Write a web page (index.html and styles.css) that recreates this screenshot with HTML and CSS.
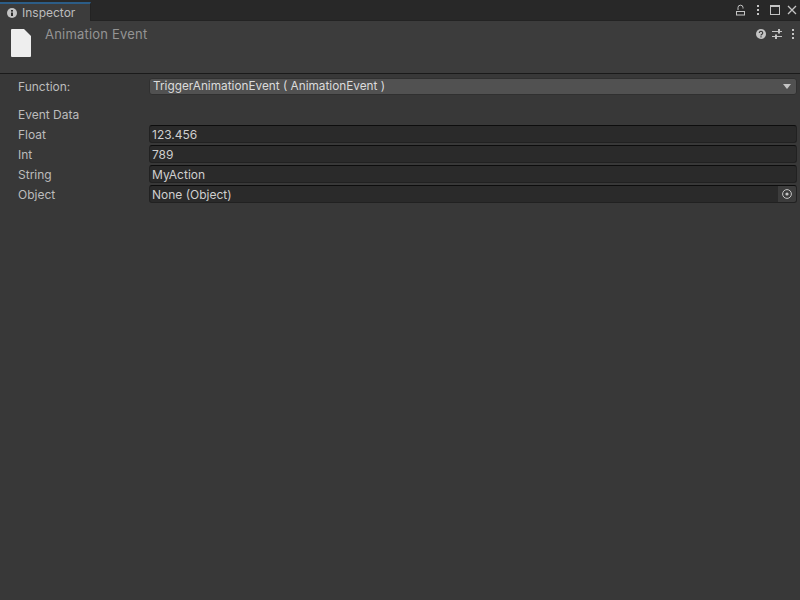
FILE: index.html
```html
<!DOCTYPE html>
<html lang="en">
<head>
<meta charset="utf-8">
<title>Inspector</title>
<link rel="stylesheet" href="styles.css">
</head>
<body>
<div class="tabbar">
  <div class="tab">
    <svg class="tab-icon" width="10" height="10" viewBox="0 0 10 10"><circle cx="5" cy="5" r="5" fill="#c4c4c4"/><rect x="4" y="2" width="2" height="1.6" fill="#2b2b2b"/><rect x="4" y="4.5" width="2" height="3.5" fill="#2b2b2b"/></svg>
    <span>Inspector</span>
  </div>
  <div class="tab-tools">
    <svg width="10" height="12" viewBox="0 0 10 12"><path d="M2 6V3.5a2.5 2.3 0 0 1 5 0V4.5" fill="none" stroke="#c4c4c4"/><rect x="0.5" y="7.5" width="8" height="3.5" fill="none" stroke="#c4c4c4"/></svg>
    <svg width="4" height="12" viewBox="0 0 4 12"><rect x="1" y="1" width="2" height="2" fill="#c4c4c4"/><rect x="1" y="5" width="2" height="2" fill="#c4c4c4"/><rect x="1" y="9" width="2" height="2" fill="#c4c4c4"/></svg>
    <svg width="10" height="10" viewBox="0 0 10 10"><rect x=".5" y=".5" width="9" height="9" fill="none" stroke="#c4c4c4"/><rect x="0" y="0" width="10" height="2" fill="#c4c4c4"/></svg>
    <svg class="close" width="10" height="10" viewBox="0 0 10 10"><path d="M1 1l8 8M9 1l-8 8" stroke="#c4c4c4" stroke-width="1.3"/></svg>
  </div>
</div>
<header class="header">
  <svg class="file-icon" width="20" height="28" viewBox="0 0 20 28"><path d="M1 0H13L20 7V27a1 1 0 0 1-1 1H1a1 1 0 0 1-1-1V1a1 1 0 0 1 1-1Z" fill="#eeeeee"/></svg>
  <div class="title">Animation Event</div>
  <div class="header-tools">
    <svg width="10" height="10" viewBox="0 0 10 10"><circle cx="5" cy="5" r="5" fill="#c4c4c4"/><path d="M3.3 3.9a1.7 1.6 0 1 1 2.6 1.4c-.6.4-.9.6-.9 1.2" fill="none" stroke="#3c3c3c" stroke-width="1.2"/><rect x="4.4" y="7.2" width="1.2" height="1.2" fill="#3c3c3c"/></svg>
    <svg width="10" height="10" viewBox="0 0 10 10"><path d="M0 2.5h10M0 7.5h10" stroke="#c4c4c4"/><rect x="6" y="0" width="2" height="4.5" fill="#c4c4c4"/><rect x="3" y="5.5" width="2" height="4.5" fill="#c4c4c4"/></svg>
    <svg class="more" width="4" height="12" viewBox="0 0 4 12"><rect x="1" y="1" width="2" height="2" fill="#c4c4c4"/><rect x="1" y="5" width="2" height="2" fill="#c4c4c4"/><rect x="1" y="9" width="2" height="2" fill="#c4c4c4"/></svg>
  </div>
</header>
<main class="body">
  <div class="row fn-row">
    <div class="label">Function:</div>
    <div class="dropdown"><span>TriggerAnimationEvent ( AnimationEvent )</span><i class="caret"></i></div>
  </div>
  <div class="section">Event Data</div>
  <div class="row">
    <div class="label">Float</div>
    <div class="field">123.456</div>
  </div>
  <div class="row">
    <div class="label">Int</div>
    <div class="field">789</div>
  </div>
  <div class="row">
    <div class="label">String</div>
    <div class="field">MyAction</div>
  </div>
  <div class="row">
    <div class="label">Object</div>
    <div class="field object"><span>None (Object)</span>
      <div class="picker"><svg width="10" height="10" viewBox="0 0 10 10"><circle cx="5" cy="5" r="4.4" fill="none" stroke="#c4c4c4"/><circle cx="5" cy="5" r="1.6" fill="#c4c4c4"/></svg></div>
    </div>
  </div>
</main>
</body>
</html>
```
FILE: styles.css
```css
* { box-sizing: border-box; }
html, body { margin: 0; height: 100%; }
body {
  background: #383838;
  color: #bcbcbc;
  font: 12px/16px Inter, "Liberation Sans", sans-serif;
  overflow: hidden;
}
.tabbar {
  height: 21px;
  background: #282828;
  border-bottom: 1px solid #232323;
  display: flex;
  justify-content: space-between;
}
.tab {
  width: 91px;
  margin-top: 2px;
  height: 19px;
  background: #3c3c3c;
  border-top: 2px solid #2c5d87;
  border-right: 1px solid #232323;
  display: flex;
  align-items: center;
  gap: 5px;
  padding-left: 7px;
  color: #bcbcbc;
}
.tab-tools {
  display: flex;
  align-items: center;
  gap: 10px;
  padding-right: 3px;
}
.close { margin-left: -3px; }
.header {
  height: 53px;
  background: #3c3c3c;
  border-bottom: 1px solid #1a1a1a;
  display: flex;
  padding-left: 11px;
  padding-top: 8px;
}
.file-icon { flex: none; }
.title {
  margin-left: 14px;
  margin-top: -3px;
  font-size: 13px;
  letter-spacing: .2px;
  color: #949494;
}
.header-tools {
  margin-left: auto;
  display: flex;
  gap: 6px;
  height: 12px;
  align-items: center;
  padding-right: 5px;
  margin-top: -1px;
}
.more { margin-left: 3px; }
.body { padding: 4px 3px 0 18px; }
.row {
  display: flex;
  height: 20px;
}
.fn-row { height: 18px; margin-bottom: 9px; }
.label { width: 131px; flex: none; line-height: 20px; }
.fn-row .label { line-height: 18px; }
.dropdown {
  flex: 1;
  height: 17px;
  background: #515151;
  border: 1px solid #303030;
  border-radius: 3px;
  padding: 0 5px 1px 3px;
  display: flex;
  align-items: center;
  justify-content: space-between;
  color: #dcdcdc;
  font-size: 11.8px;
}
.caret {
  width: 0;
  height: 0;
  margin-top: 1px;
  border-left: 4px solid transparent;
  border-right: 4px solid transparent;
  border-top: 5px solid #c4c4c4;
}
.section { height: 20px; line-height: 20px; }
.field {
  flex: 1;
  height: 18px;
  background: #2a2a2a;
  border: 1px solid #212121;
  border-top-color: #0d0d0d;
  border-radius: 3px;
  padding: 0 2px;
  line-height: 17px;
  color: #cfcfcf;
}
.object {
  display: flex;
  justify-content: space-between;
  padding-right: 0;
}
.picker {
  width: 18px;
  background: #3c3c3c;
  display: flex;
  align-items: center;
  justify-content: center;
  border-radius: 0 2px 2px 0;
}
```
